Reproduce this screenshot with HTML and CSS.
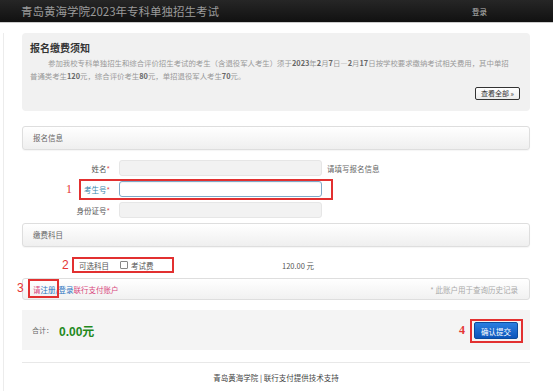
FILE: index.html
```html
<!DOCTYPE html>
<html lang="zh-CN">
<head>
  <meta charset="UTF-8">
  <meta name="viewport" content="width=device-width, initial-scale=1.0">
  <title>青岛黄海学院2023年专科单独招生考试</title>
  <link rel="stylesheet" href="styles.css">
</head>
<body>
  <div class="navbar">
    <span class="brand">青岛黄海学院2023年专科单独招生考试</span>
    <a class="login">登录</a>
  </div>

  <div class="page">
    <div class="main">
      <div class="notice">
        <h3>报名缴费须知</h3>
        <p>参加我校专科单独招生和综合评价招生考试的考生（含退役军人考生）须于<b>2023</b>年<b>2</b>月<b>7</b>日—<b>2</b>月<b>17</b>日按学校要求缴纳考试相关费用，其中单招<br>普通类考生<b>120</b>元，综合评价考生<b>80</b>元，单招退役军人考生<b>70</b>元。</p>
        <div class="notice-foot"><a class="btn-more">查看全部 »</a></div>
      </div>

      <div class="section-head first">报名信息</div>

      <div class="form-row">
        <label class="field-label">姓名<i>*</i></label>
        <input class="field" disabled>
        <span class="help">请填写报名信息</span>
      </div>
      <div class="form-row">
        <span class="mark num-1">1</span>
        <span class="mark-box box-1"></span>
        <label class="field-label active">考生号<i>*</i></label>
        <input class="field focus">
      </div>
      <div class="form-row">
        <label class="field-label">身份证号<i>*</i></label>
        <input class="field" disabled>
      </div>

      <div class="section-head">缴费科目</div>

      <div class="fee-row">
        <span class="mark num-2">2</span>
        <span class="mark-box box-2"></span>
        <span class="fee-name">可选科目</span>
        <span class="check"></span>
        <span class="fee-item">考试费</span>
        <span class="price">120.00 元</span>
      </div>

      <div class="account-bar">
        <span class="mark num-3">3</span>
        <span class="mark-box box-3"></span>
        <span class="pink">请</span><a class="blue">注册/登录</a><span class="pink">联行支付账户</span>
        <span class="account-tip">* 此账户用于查询历史记录</span>
      </div>

      <div class="total-bar">
        <span class="mark num-4">4</span>
        <span class="mark-box box-4"></span>
        <span class="total-label">合计：</span>
        <span class="total-sum">0.00元</span>
        <a class="btn-submit">确认提交</a>
      </div>

      <hr class="divider">
      <div class="footer">青岛黄海学院 | 联行支付提供技术支持</div>
    </div>
  </div>
</body>
</html>
```

FILE: styles.css
```css
body {
  margin: 0;
  font-family: "Noto Sans CJK SC", "Liberation Sans", sans-serif;
  font-size: 7.5px;
  color: #555;
  background: #fff;
}

.navbar {
  height: 22px;
  background: linear-gradient(#262626, #111);
  border-bottom: 1px solid #ccc;
  display: flex;
  align-items: center;
  padding: 0 66px 0 21px;
}

.brand {
  font-size: 11.5px;
  color: #9a9a9a;
  flex: 1;
}

.login {
  font-size: 7.5px;
  color: #bbb;
}

.page {
  margin-left: 3px;
  border-left: 1px solid #ececec;
  min-height: 368px;
}

.main {
  padding: 0 23px 0 18px;
}

.notice {
  margin-top: 10px;
  height: 78px;
  box-sizing: border-box;
  background: #f1f1f1;
  border-radius: 4px;
  padding: 7px 6px 0 8px;
}

.notice h3 {
  margin: 0;
  font-size: 10px;
  line-height: 15px;
  color: #333;
}

.notice p {
  margin: 1px 0 0;
  font-size: 7.4px;
  line-height: 13px;
  color: #999;
  text-indent: 18px;
  white-space: nowrap;
}

.notice p b {
  color: #666;
}

.notice-foot {
  display: flex;
  justify-content: flex-end;
  margin-top: 5px;
  padding-right: 4px;
}

.btn-more {
  display: inline-block;
  height: 11px;
  line-height: 11px;
  width: 43px;
  text-align: center;
  border: 1px solid #333;
  border-radius: 2px;
  background: linear-gradient(#fff, #ececec);
  color: #333;
  font-size: 7px;
}

.section-head {
  height: 22px;
  line-height: 22px;
  margin-top: 4px;
  padding-left: 10px;
  border: 1px solid #dedede;
  border-radius: 3px;
  background: linear-gradient(#fff, #efefef);
  box-shadow: 0 1px 1px rgba(0, 0, 0, 0.04);
  color: #666;
}

.section-head.first {
  margin-top: 15px;
  margin-bottom: 10px;
}

.form-row {
  position: relative;
  display: flex;
  align-items: center;
  height: 16px;
  margin-bottom: 5px;
}

.field-label {
  width: 88px;
  text-align: right;
  color: #555;
}

.field-label i {
  font-style: normal;
  color: #e04848;
}

.field-label.active {
  color: #3a87ad;
}

.field {
  margin: 0 0 0 9px;
  width: 203px;
  height: 16px;
  box-sizing: border-box;
  border: 1px solid #e6e6e6;
  border-radius: 3px;
  background: #f2f2f2;
  padding: 0 4px;
}

.field.focus {
  background: #fff;
  border-color: #7fa9c9;
  box-shadow: inset 0 1px 1px rgba(0, 0, 0, 0.06);
}

.help {
  margin-left: 5px;
  color: #666;
}

.fee-row {
  position: relative;
  display: flex;
  align-items: center;
  height: 16px;
  margin-top: 10px;
  padding-left: 57px;
}

.fee-name {
  width: 41px;
}

.check {
  width: 6px;
  height: 6px;
  border: 1px solid #888;
  border-radius: 1px;
  margin-right: 3px;
}

.fee-item {
  width: 42px;
}

.price {
  margin-left: 109px;
  color: #555;
}

.account-bar {
  position: relative;
  display: flex;
  align-items: center;
  height: 20px;
  margin-top: 5px;
  padding: 0 11px 0 10px;
  border: 1px solid #dedede;
  border-radius: 3px;
  background: linear-gradient(#fff, #f1f1f1);
}

.pink {
  color: #d8467c;
}

.blue {
  color: #2a72c0;
}

.account-tip {
  margin-left: auto;
  color: #aaa;
}

.total-bar {
  position: relative;
  display: flex;
  align-items: center;
  height: 40px;
  margin-top: 10px;
  padding: 0 12px 0 10px;
  background: #f4f4f4;
}

.total-label {
  font-size: 7px;
  color: #666;
}

.total-sum {
  margin-left: 6px;
  font-family: "Liberation Sans", "Noto Sans CJK SC", sans-serif;
  font-size: 12px;
  font-weight: bold;
  color: #23891c;
}

.btn-submit {
  margin-left: auto;
  width: 44px;
  height: 17px;
  line-height: 17px;
  box-sizing: border-box;
  text-align: center;
  color: #fff;
  border: 1px solid #0b4a9c;
  border-radius: 2px;
  background: linear-gradient(#2a7ee0, #0b55bb);
}

.divider {
  margin: 12px 0 0;
  border: 0;
  border-top: 1px solid #e8e8e8;
}

.footer {
  text-align: center;
  padding-top: 9px;
  color: #444;
}

/* red annotation marks laid over the form */
.mark {
  position: absolute;
  color: #e53434;
  font-size: 12px;
  line-height: 12px;
}

.mark-box {
  position: absolute;
  border: 2px solid #e23030;
  box-sizing: border-box;
}

.num-1 { left: 44px; top: 2px; font-family: "Liberation Serif", serif; }
.box-1 { left: 57px; top: -2px; width: 254px; height: 21px; }

.num-2 { left: 40px; top: 2px; font-family: "Liberation Sans", sans-serif; }
.box-2 { left: 50px; top: 0; width: 102px; height: 16px; }

.num-3 { left: -6px; top: 3px; font-family: "Liberation Sans", sans-serif; }
.box-3 { left: 5px; top: 0; width: 31px; height: 19px; }

.num-4 { left: 437px; top: 14px; font-family: "Liberation Serif", serif; font-weight: bold; }
.box-4 { left: 448px; top: 9px; width: 53px; height: 24px; }
```
